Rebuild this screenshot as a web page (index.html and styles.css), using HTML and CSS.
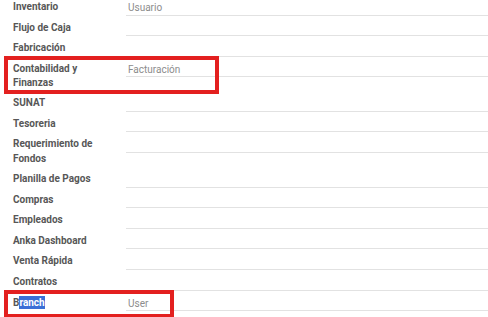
FILE: index.html
```html
<!DOCTYPE html>
<html>
<head>
<meta charset="UTF-8">
<link rel="stylesheet" href="styles.css">
</head>
<body>
<div class="groups">
  <div class="row">
    <div class="label">Inventario</div>
    <div class="field">Usuario</div>
  </div>
  <div class="row">
    <div class="label">Flujo de Caja</div>
    <div class="field"></div>
  </div>
  <div class="row">
    <div class="label">Fabricación</div>
    <div class="field"></div>
  </div>
  <div class="row">
    <div class="label">Contabilidad y Finanzas</div>
    <div class="field">Facturación</div>
    <div class="mark mark-wide"></div>
  </div>
  <div class="row">
    <div class="label">SUNAT</div>
    <div class="field"></div>
  </div>
  <div class="row">
    <div class="label">Tesoreria</div>
    <div class="field"></div>
  </div>
  <div class="row">
    <div class="label">Requerimiento de Fondos</div>
    <div class="field"></div>
  </div>
  <div class="row">
    <div class="label">Planilla de Pagos</div>
    <div class="field"></div>
  </div>
  <div class="row">
    <div class="label">Compras</div>
    <div class="field"></div>
  </div>
  <div class="row">
    <div class="label">Empleados</div>
    <div class="field"></div>
  </div>
  <div class="row">
    <div class="label">Anka Dashboard</div>
    <div class="field"></div>
  </div>
  <div class="row">
    <div class="label">Venta Rápida</div>
    <div class="field"></div>
  </div>
  <div class="row">
    <div class="label">Contratos</div>
    <div class="field"></div>
  </div>
  <div class="row">
    <div class="label">B<span class="selected">ranch</span></div>
    <div class="field">User</div>
    <div class="mark mark-short"></div>
  </div>
</div>
</body>
</html>
```

FILE: styles.css
```css
html, body {
  margin: 0;
  padding: 0;
  background: #fff;
}
body {
  font-family: Roboto, "Liberation Sans", sans-serif;
  font-size: 10px;
  min-height: 100vh;
  overflow: hidden;
}
.groups {
  margin-top: -5px;
  padding-bottom: 20px;
}
.row {
  position: relative;
  display: flex;
  align-items: flex-start;
}
.label {
  box-sizing: border-box;
  width: 126px;
  flex: none;
  padding: 5px 26px 0.5px 13px;
  line-height: 14.5px;
  font-weight: bold;
  color: #575757;
}
.field {
  flex: 1;
  box-sizing: border-box;
  height: 20.6px;
  padding: 5px 0 0 2px;
  line-height: 15px;
  color: #8c8c8c;
  border-bottom: 1px solid #e2e2e2;
}
.selected {
  background: #3a6fd6;
  color: #fff;
  padding: 1px 0;
}
.mark {
  position: absolute;
  left: 4px;
  box-sizing: border-box;
  border: 4px solid #e3201f;
}
.mark-wide {
  top: -1px;
  width: 215px;
  height: 38px;
}
.mark-short {
  top: -1px;
  width: 170px;
  height: 28px;
}
```
